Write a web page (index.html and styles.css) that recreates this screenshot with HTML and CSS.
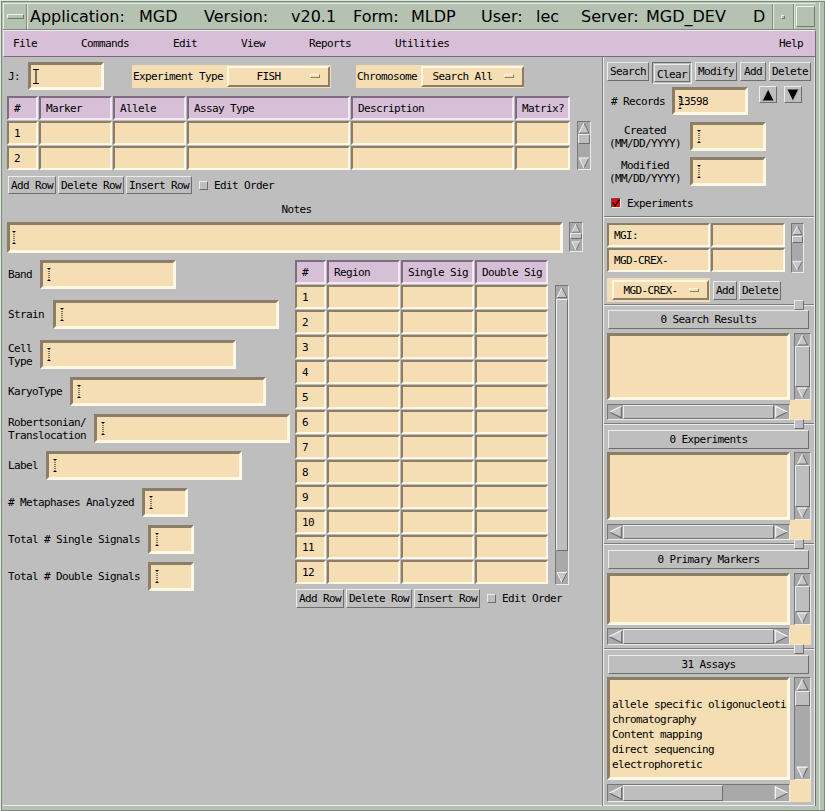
FILE: index.html
```html
<!DOCTYPE html>
<html lang="en">
<head>
<meta charset="utf-8">
<title>MGD - MLDP</title>
<link rel="stylesheet" href="styles.css">
</head>
<body>
<svg class="defs" width="0" height="0" aria-hidden="true">
  <symbol id="a-up" viewBox="0 0 12 12">
    <polygon points="6,1 11,11 1,11" fill="#c6c6c6"/>
    <polyline points="6,1 11,11 1,11" fill="none" stroke="#6c6c6c"/>
    <polyline points="1,11 6,1" fill="none" stroke="#f4f4f4"/>
  </symbol>
  <symbol id="a-down" viewBox="0 0 12 12">
    <polygon points="1,1 11,1 6,11" fill="#c6c6c6"/>
    <polyline points="11,1 6,11" fill="none" stroke="#6c6c6c"/>
    <polyline points="6,11 1,1 11,1" fill="none" stroke="#f4f4f4"/>
  </symbol>
  <symbol id="a-left" viewBox="0 0 12 12">
    <polygon points="1,6 11,1 11,11" fill="#c6c6c6"/>
    <polyline points="11,1 11,11 1,6" fill="none" stroke="#6c6c6c"/>
    <polyline points="1,6 11,1" fill="none" stroke="#f4f4f4"/>
  </symbol>
  <symbol id="a-right" viewBox="0 0 12 12">
    <polygon points="11,6 1,1 1,11" fill="#c6c6c6"/>
    <polyline points="11,6 1,11" fill="none" stroke="#6c6c6c"/>
    <polyline points="1,11 1,1 11,6" fill="none" stroke="#f4f4f4"/>
  </symbol>
  <symbol id="cur-solid" viewBox="0 0 6 15">
    <path d="M0 0.5H6M3 0.5V14.5M0 14.5H6" stroke="#000" fill="none"/>
  </symbol>
  <symbol id="cur-dot" viewBox="0 0 4 13">
    <path d="M0.5 0.5H3.5M0.5 12.5H3.5" stroke="#000" fill="none"/>
    <path d="M2 1V12" stroke="#000" stroke-dasharray="1 1" fill="none"/>
  </symbol>
  <symbol id="tri-up" viewBox="0 0 12 12">
    <polygon points="6,0.5 11.5,11.5 0.5,11.5" fill="#000"/>
    <polyline points="0.5,11.5 6,0.5" fill="none" stroke="#9a9a9a"/>
  </symbol>
  <symbol id="tri-down" viewBox="0 0 12 12">
    <polygon points="0.5,0.5 11.5,0.5 6,11.5" fill="#000"/>
    <polyline points="11.5,0.5 6,11.5" fill="none" stroke="#9a9a9a"/>
  </symbol>
</svg>

<div class="window">
  <div class="titlebar">
    <div class="tb-menu"><span class="tb-bar"></span></div>
    <div class="tb-title">
      <span>Application:</span><span>MGD</span><span>Version:</span><span>v20.1</span><span>Form:</span><span>MLDP</span><span>User:</span><span>lec</span><span>Server:</span><span>MGD_DEV</span><span>D</span>
    </div>
    <div class="tb-gap"></div>
    <div class="tb-min"><span class="tb-dot"></span></div>
    <div class="tb-max"><span class="tb-sq"></span></div>
  </div>

  <div class="menubar">
    <span>File</span><span>Commands</span><span>Edit</span><span>View</span><span>Reports</span><span>Utilities</span><span class="help">Help</span>
  </div>

  <div class="main">
    <!-- LEFT -->
    <div class="left">
      <div class="row1">
        <span class="lbl">J:</span>
        <div class="tf tf-j"><svg class="cur-s"><use href="#cur-solid"/></svg></div>
        <div class="opt opt-exp">
          <span class="opt-lbl">Experiment Type</span>
          <div class="optbtn"><span class="opt-val">FISH</span><span class="ind"></span></div>
        </div>
        <div class="opt opt-chr">
          <span class="opt-lbl">Chromosome</span>
          <div class="optbtn"><span class="opt-val">Search All</span><span class="ind"></span></div>
        </div>
      </div>

      <div class="t1wrap">
        <div class="grid grid1">
          <div class="hc">#</div><div class="hc">Marker</div><div class="hc">Allele</div><div class="hc">Assay Type</div><div class="hc">Description</div><div class="hc">Matrix?</div>
          <div class="c">1</div><div class="c"></div><div class="c"></div><div class="c"></div><div class="c"></div><div class="c"></div>
          <div class="c">2</div><div class="c"></div><div class="c"></div><div class="c"></div><div class="c"></div><div class="c"></div>
        </div>
        <div class="vs vs-t1">
          <svg class="arrv"><use href="#a-up"/></svg>
          <div class="thumb"></div>
          <div class="fill"></div>
          <svg class="arrv"><use href="#a-down"/></svg>
        </div>
      </div>

      <div class="btnrow btnrow1">
        <span class="btn">Add Row</span><span class="btn">Delete Row</span><span class="btn">Insert Row</span>
        <span class="cb"></span><span class="cb-lbl">Edit Order</span>
      </div>

      <div class="notes-lbl">Notes</div>
      <div class="notes-row">
        <div class="tf tf-notes"><svg class="cur-d"><use href="#cur-dot"/></svg></div>
        <div class="vs vs-notes">
          <svg class="arrv"><use href="#a-up"/></svg>
          <div class="thumb"></div>
          <div class="fill"></div>
          <svg class="arrv"><use href="#a-down"/></svg>
        </div>
      </div>

      <div class="lower">
        <div class="fields">
          <div class="frow loose"><span class="lbl">Band</span><div class="tf w136"><svg class="cur-d"><use href="#cur-dot"/></svg></div></div>
          <div class="frow loose wide"><span class="lbl">Strain</span><div class="tf w226"><svg class="cur-d"><use href="#cur-dot"/></svg></div></div>
          <div class="frow"><span class="lbl">Cell<br>Type</span><div class="tf w196"><svg class="cur-d"><use href="#cur-dot"/></svg></div></div>
          <div class="frow"><span class="lbl">KaryoType</span><div class="tf w196"><svg class="cur-d"><use href="#cur-dot"/></svg></div></div>
          <div class="frow"><span class="lbl">Robertsonian/<br>Translocation</span><div class="tf w196"><svg class="cur-d"><use href="#cur-dot"/></svg></div></div>
          <div class="frow"><span class="lbl">Label</span><div class="tf w196"><svg class="cur-d"><use href="#cur-dot"/></svg></div></div>
          <div class="frow"><span class="lbl"># Metaphases Analyzed</span><div class="tf w46"><svg class="cur-d"><use href="#cur-dot"/></svg></div></div>
          <div class="frow"><span class="lbl">Total # Single Signals</span><div class="tf w46"><svg class="cur-d"><use href="#cur-dot"/></svg></div></div>
          <div class="frow"><span class="lbl">Total # Double Signals</span><div class="tf w46"><svg class="cur-d"><use href="#cur-dot"/></svg></div></div>
        </div>

        <div class="t2col">
          <div class="t2top">
            <div class="grid grid2">
              <div class="hc">#</div><div class="hc">Region</div><div class="hc">Single Sig</div><div class="hc">Double Sig</div>
              <div class="c">1</div><div class="c"></div><div class="c"></div><div class="c"></div>
              <div class="c">2</div><div class="c"></div><div class="c"></div><div class="c"></div>
              <div class="c">3</div><div class="c"></div><div class="c"></div><div class="c"></div>
              <div class="c">4</div><div class="c"></div><div class="c"></div><div class="c"></div>
              <div class="c">5</div><div class="c"></div><div class="c"></div><div class="c"></div>
              <div class="c">6</div><div class="c"></div><div class="c"></div><div class="c"></div>
              <div class="c">7</div><div class="c"></div><div class="c"></div><div class="c"></div>
              <div class="c">8</div><div class="c"></div><div class="c"></div><div class="c"></div>
              <div class="c">9</div><div class="c"></div><div class="c"></div><div class="c"></div>
              <div class="c">10</div><div class="c"></div><div class="c"></div><div class="c"></div>
              <div class="c">11</div><div class="c"></div><div class="c"></div><div class="c"></div>
              <div class="c">12</div><div class="c"></div><div class="c"></div><div class="c"></div>
            </div>
            <div class="vs vs-t2">
              <svg class="arrv"><use href="#a-up"/></svg>
              <div class="thumb"></div>
              <div class="fill"></div>
              <svg class="arrv"><use href="#a-down"/></svg>
            </div>
          </div>
          <div class="btnrow btnrow2">
            <span class="btn">Add Row</span><span class="btn">Delete Row</span><span class="btn">Insert Row</span>
            <span class="cb"></span><span class="cb-lbl">Edit Order</span>
          </div>
        </div>
      </div>
    </div>

    <!-- RIGHT -->
    <div class="right">
      <div class="rtop">
        <div class="cmdrow">
          <span class="btn">Search</span>
          <span class="defbtn"><span class="btn">Clear</span></span>
          <span class="btn">Modify</span>
          <span class="btn btn-add">Add</span>
          <span class="btn">Delete</span>
        </div>
        <div class="recrow">
          <span class="lbl">#&nbsp;Records</span>
          <div class="tf tf-rec"><svg class="cur-d cur-over"><use href="#cur-dot"/></svg>13598</div>
          <span class="arrbtn arr-up"><svg class="tri"><use href="#tri-up"/></svg></span>
          <span class="arrbtn arr-down"><svg class="tri"><use href="#tri-down"/></svg></span>
        </div>
        <div class="daterow">
          <span class="dlbl">Created<br>(MM/DD/YYYY)</span>
          <div class="tf tf-date"><svg class="cur-d"><use href="#cur-dot"/></svg></div>
        </div>
        <div class="daterow daterow2">
          <span class="dlbl">Modified<br>(MM/DD/YYYY)</span>
          <div class="tf tf-date"><svg class="cur-d"><use href="#cur-dot"/></svg></div>
        </div>
        <div class="exprow">
          <span class="cb-on"><svg class="chk" viewBox="0 0 8 8"><path d="M0.8 3.6 L3.2 6.8 L7.4 0.8" stroke="#000" stroke-width="1.6" fill="none"/></svg></span>
          <span class="cb-lbl">Experiments</span>
        </div>
      </div>
      <div class="sep"></div>

      <div class="mgipane">
        <div class="mgitop">
          <div class="grid grid3">
            <div class="c">MGI:</div><div class="c"></div>
            <div class="c">MGD-CREX-</div><div class="c"></div>
          </div>
          <div class="vs vs-mgi">
            <svg class="arrv"><use href="#a-up"/></svg>
            <div class="thumb"></div>
            <div class="fill"></div>
            <svg class="arrv"><use href="#a-down"/></svg>
          </div>
        </div>
        <div class="mgirow">
          <div class="opt opt-mgi">
            <div class="optbtn"><span class="opt-val">MGD-CREX-</span><span class="ind"></span></div>
          </div>
          <span class="btn btn-sm">Add</span>
          <span class="btn btn-sm">Delete</span>
        </div>
      </div>
      <div class="sep"><span class="sash"></span></div>

      <div class="sect s1">
        <div class="bar">0 Search Results</div>
        <div class="sw sw1">
          <div class="list"></div>
          <div class="vs vs-full"><svg class="arrv"><use href="#a-up"/></svg><div class="thumb"></div><svg class="arrv"><use href="#a-down"/></svg></div>
          <div class="corner"></div>
          <div class="hs"><svg class="arrh"><use href="#a-left"/></svg><div class="thumb"></div><svg class="arrh"><use href="#a-right"/></svg></div>
        </div>
      </div>
      <div class="sep"><span class="sash"></span></div>

      <div class="sect s2">
        <div class="bar">0 Experiments</div>
        <div class="sw sw2">
          <div class="list"></div>
          <div class="vs vs-full"><svg class="arrv"><use href="#a-up"/></svg><div class="thumb"></div><svg class="arrv"><use href="#a-down"/></svg></div>
          <div class="corner"></div>
          <div class="hs"><svg class="arrh"><use href="#a-left"/></svg><div class="thumb"></div><svg class="arrh"><use href="#a-right"/></svg></div>
        </div>
      </div>
      <div class="sep"><span class="sash"></span></div>

      <div class="sect s3">
        <div class="bar">0 Primary Markers</div>
        <div class="sw sw3">
          <div class="list"></div>
          <div class="vs vs-full"><svg class="arrv"><use href="#a-up"/></svg><div class="thumb"></div><svg class="arrv"><use href="#a-down"/></svg></div>
          <div class="corner"></div>
          <div class="hs"><svg class="arrh"><use href="#a-left"/></svg><div class="thumb"></div><svg class="arrh"><use href="#a-right"/></svg></div>
        </div>
      </div>
      <div class="sep"><span class="sash"></span></div>

      <div class="sect s4">
        <div class="bar">31 Assays</div>
        <div class="sw sw4">
          <div class="list list-asy">
            <div>allele specific oligonucleoti</div>
            <div>chromatography</div>
            <div>Content mapping</div>
            <div>direct sequencing</div>
            <div>electrophoretic</div>
          </div>
          <div class="vs vs-asy"><svg class="arrv"><use href="#a-up"/></svg><div class="thumb"></div><div class="fill"></div><svg class="arrv"><use href="#a-down"/></svg></div>
          <div class="corner"></div>
          <div class="hs hs-asy"><svg class="arrh"><use href="#a-left"/></svg><div class="thumb"></div><div class="fill"></div><svg class="arrh"><use href="#a-right"/></svg></div>
        </div>
      </div>
    </div>
  </div>
</div>
</body>
</html>
```

FILE: styles.css
```css
* { box-sizing: border-box; margin: 0; padding: 0; }
html, body { width: 825px; height: 811px; overflow: hidden; }
body {
  background: #b5c2b1;
  font-family: "DejaVu Sans Mono", "Liberation Mono", monospace;
  font-size: 11px;
  letter-spacing: -0.62px;
  line-height: 13px;
  color: #000;
}
.defs { position: absolute; width: 0; height: 0; overflow: hidden; }

.window {
  width: 825px;
  height: 811px;
  padding: 3px 9px 5px 3px;
  box-shadow: inset 1px 1px 0 #dfe7dd, inset 2px 2px 0 #7e8b7c, inset -1px -1px 0 #7e8b7c, inset -5px 0 0 #b5c2b1, inset -6px 0 0 #e1e8df;
}

/* ---------- title bar ---------- */
.titlebar {
  display: flex;
  height: 27px;
  border-top: 1px solid #e3eae1;
  border-bottom: 1px solid #7e8b7c;
}
.tb-menu {
  width: 24px;
  display: flex;
  align-items: center;
  justify-content: center;
  border-right: 1px solid #7e8b7c;
  border-left: 1px solid #e3eae1;
}
.tb-bar {
  width: 17px;
  height: 5px;
  border: 1px solid;
  border-color: #eef3ec #6f7c6d #6f7c6d #eef3ec;
}
.tb-title {
  width: 740px;
  overflow: hidden;
  display: grid;
  grid-template-columns: 109px 65px 87px 62px 58px 70px 55px 45px 65px 107px 14px;
  align-items: center;
  padding-left: 2px;
  font-family: "DejaVu Sans", "Liberation Sans", sans-serif;
  font-size: 16px;
  letter-spacing: 0;
  line-height: 20px;
  white-space: nowrap;
  border-left: 1px solid #e3eae1;
}
.tb-gap { width: 5px; }
.tb-min, .tb-max {
  display: flex;
  align-items: center;
  justify-content: center;
  border-left: 1px solid #7e8b7c;
  box-shadow: inset 1px 0 0 #e3eae1;
}
.tb-min { width: 21px; }
.tb-max { width: 23px; }
.tb-dot {
  width: 4px;
  height: 4px;
  border: 1px solid;
  border-color: #eef3ec #6f7c6d #6f7c6d #eef3ec;
}
.tb-sq {
  width: 19px;
  height: 21px;
  border: 1px solid;
  border-color: #eef3ec #6f7c6d #6f7c6d #eef3ec;
}

/* ---------- menu bar ---------- */
.menubar {
  display: flex;
  align-items: center;
  gap: 44px;
  height: 27px;
  padding: 0 12px 0 9px;
  background: #d8bfd8;
  border: 1px solid;
  border-color: #f3e8f3 #7b6a7b #7b6a7b #f3e8f3;
}
.menubar .help { margin-left: auto; }

/* ---------- main ---------- */
.main {
  display: flex;
  height: 749px;
  background: #bebebe;
  box-shadow: inset 0 -1px 0 #ececec;
}
.left { width: 599px; display: flow-root; }
.right {
  width: 214px;
  border-left: 1px solid #7c7c7c;
  border-right: 1px solid #6e6e6e;
  box-shadow: inset 1px 0 0 #ececec, inset -1px 0 0 #e6e6e6;
  padding: 0 1px;
}

/* generic widgets */
.lbl { white-space: nowrap; }
.tf {
  display: flex;
  align-items: center;
  height: 29px;
  padding-left: 4px;
  background: #f5deb3;
  border: 3px solid;
  border-color: #8c7e66 #fff8e4 #fff8e4 #8c7e66;
  position: relative;
}
.cur-s { width: 6px; height: 15px; display: block; }
.cur-d { width: 4px; height: 13px; display: block; }
.w136 { width: 136px; }
.w226 { width: 226px; }
.w196 { width: 196px; }
.w46 { width: 46px; }

.btn {
  display: inline-flex;
  align-items: center;
  justify-content: center;
  height: 18px;
  padding: 0 2px;
  background: #bebebe;
  border: 1px solid;
  border-color: #ececec #6e6e6e #6e6e6e #ececec;
  white-space: nowrap;
}
.cb {
  width: 9px;
  height: 9px;
  background: #bebebe;
  border: 1px solid;
  border-color: #ececec #6e6e6e #6e6e6e #ececec;
}
.cb-lbl { white-space: nowrap; }

.opt {
  display: flex;
  align-items: center;
  background: #f5deb3;
  height: 23px;
  padding-left: 1px;
}
.opt-lbl { white-space: nowrap; }
.optbtn {
  display: flex;
  align-items: center;
  width: 103px;
  height: 21px;
  margin-left: 4px;
  background: #f5deb3;
  border: 2px solid;
  border-color: #fff8e4 #8c7e66 #8c7e66 #fff8e4;
}
.opt-val { flex: 1; text-align: center; white-space: nowrap; }
.ind {
  width: 10px;
  height: 4px;
  margin: 0 8px 0 2px;
  border: 1px solid;
  border-color: #fff8e4 #8c7e66 #8c7e66 #fff8e4;
}

.grid { display: grid; gap: 1px; }
.hc, .c {
  display: flex;
  align-items: center;
  padding-left: 5px;
  border: 2px solid;
  white-space: nowrap;
}
.hc {
  background: #d8bfd8;
  border-color: #7f6d7f #f3e8f3 #f3e8f3 #7f6d7f;
}
.c {
  background: #f5deb3;
  border-color: #8c7e66 #fff8e4 #fff8e4 #8c7e66;
}

/* scrollbars */
.vs {
  display: flex;
  flex-direction: column;
  background: #a9a9a9;
  border: 1px solid;
  border-color: #777 #ececec #ececec #777;
}
.arrv { display: block; width: 100%; height: 12px; flex: none; }
.vs .thumb, .hs .thumb {
  background: #bebebe;
  border: 1px solid;
  border-color: #ececec #6e6e6e #6e6e6e #ececec;
  flex: none;
}
.fill { flex: 1; }
.vs-full .thumb { flex: 1; }
.hs {
  display: flex;
  background: #a9a9a9;
  border: 1px solid;
  border-color: #777 #ececec #ececec #777;
}
.arrh { display: block; width: 15px; height: 100%; flex: none; }
.hs .thumb { flex: 1; }
.hs-asy .thumb { flex: none; width: 100px; }

/* ---------- left column ---------- */
.row1 {
  display: flex;
  align-items: center;
  height: 28px;
  margin-top: 5px;
  padding-left: 5px;
}
.row1 .lbl { width: 12px; }
.tf-j { width: 76px; height: 28px; margin-left: 8px; padding-left: 2px; }
.opt-exp { width: 199px; margin-left: 28px; }
.opt-chr { width: 168px; margin-left: 25px; }

.t1wrap { display: flex; margin: 6px 0 0 4px; }
.grid1 {
  grid-template-columns: 31px 73px 73px 163px 163px 55px;
  grid-template-rows: 24px 24px 24px;
}
.vs-t1 { width: 14px; height: 49px; margin: 25px 0 0 7px; }
.vs-t1 .thumb { height: 10px; }

.btnrow { display: flex; align-items: center; gap: 2px; }
.btnrow1 { margin: 6px 0 0 5px; height: 18px; }
.btnrow2 { margin: 4px 0 0 1px; height: 19px; }
.btnrow2 .btn { height: 19px; }
.btnrow .cb { margin-left: 5px; }
.btnrow .cb-lbl { margin-left: 4px; }

.notes-lbl { margin: 9px 0 0 4px; width: 579px; text-align: center; height: 13px; }
.notes-row { display: flex; margin: 6px 0 0 4px; }
.tf-notes { width: 556px; height: 31px; padding-left: 2px; }
.vs-notes { width: 14px; height: 30px; margin-left: 6px; }
.vs-notes .arrv { height: 10px; }
.vs-notes .thumb { height: 6px; }

.lower { display: flex; margin-top: 7px; }
.fields { width: 287px; margin-left: 5px; display: flex; flex-direction: column; }
.frow { display: flex; align-items: center; gap: 8px; height: 29px; margin-bottom: 8px; }
.frow.loose { margin-bottom: 11px; }
.frow.wide { gap: 9px; }

.t2col { display: flex; flex-direction: column; }
.t2top { display: flex; }
.grid2 {
  grid-template-columns: 31px 73px 73px 73px;
  grid-template-rows: repeat(13, 24px);
}
.vs-t2 { width: 14px; height: 300px; margin: 25px 0 0 7px; }
.vs-t2 .arrv { height: 13px; }
.vs-t2 .thumb { height: 252px; }

/* ---------- right column ---------- */
.rtop { height: 159px; display: flow-root; }
.cmdrow { display: flex; align-items: flex-start; gap: 3px; margin: 5px 0 0 3px; height: 22px; }
.cmdrow > .btn { height: 19px; }
.btn-add { padding: 0 3px; }
.defbtn {
  display: inline-flex;
  padding: 1px;
  border: 1px solid;
  border-color: #6e6e6e #ececec #ececec #6e6e6e;
}
.defbtn .btn { height: 18px; padding-top: 2px; }

.recrow { display: flex; align-items: flex-start; height: 29px; margin: 2px 0 0 7px; }
.recrow .lbl { align-self: center; margin-top: 2px; }
.tf-rec { width: 76px; height: 28px; margin: 1px 0 0 7px; padding-left: 3px; }
.cur-over { position: absolute; left: 3px; top: 6px; }
.arrbtn {
  display: flex;
  align-items: center;
  justify-content: center;
  width: 18px;
  height: 17px;
  background: #bebebe;
  border: 1px solid;
  border-color: #ececec #6e6e6e #6e6e6e #ececec;
}
.arr-up { margin-left: 11px; }
.arr-down { margin-left: 7px; }
.tri { width: 12px; height: 12px; display: block; }

.daterow { display: flex; align-items: center; margin: 7px 0 0 5px; height: 29px; }
.daterow2 { margin-top: 6px; }
.dlbl { width: 72px; text-align: center; white-space: nowrap; }
.tf-date { width: 76px; margin-left: 9px; }

.exprow { display: flex; align-items: center; margin: 12px 0 0 7px; height: 10px; }
.cb-on {
  display: flex;
  align-items: center;
  justify-content: center;
  width: 10px;
  height: 10px;
  background: #ff0000;
  border: 1px solid;
  border-color: #555 #ececec #ececec #555;
}
.chk { width: 8px; height: 8px; display: block; }
.exprow .cb-lbl { margin-left: 6px; }

.sep {
  position: relative;
  height: 2px;
  border-top: 1px solid #7c7c7c;
  border-bottom: 1px solid #ececec;
}
.sash {
  position: absolute;
  left: 190px;
  top: -5px;
  width: 10px;
  height: 10px;
  background: #bebebe;
  border: 1px solid;
  border-color: #ececec #6e6e6e #6e6e6e #ececec;
}

.mgipane { height: 86px; display: flow-root; }
.mgitop { display: flex; margin: 5px 0 0 3px; }
.grid3 {
  grid-template-columns: 103px 74px;
  grid-template-rows: 24px 24px;
}
.vs-mgi { width: 13px; height: 50px; margin-left: 6px; }
.vs-mgi .thumb { height: 7px; }
.mgirow { display: flex; align-items: center; margin: 5px 0 0 3px; height: 24px; }
.opt-mgi { width: 103px; height: 24px; padding-left: 5px; }
.opt-mgi .optbtn { width: 97px; height: 20px; margin-left: 0; }
.mgirow .btn { height: 19px; }
.mgirow .btn:first-of-type { margin-left: 3px; }
.mgirow .btn + .btn { margin-left: 2px; }

.sect { display: flex; flex-direction: column; }
.s1 { padding-top: 4px; height: 117px; }
.s2 { padding-top: 5px; height: 118px; }
.s3 { padding-top: 5px; height: 103px; }
.s4 { padding-top: 5px; }
.bar {
  width: 201px;
  height: 19px;
  margin-left: 4px;
  display: flex;
  align-items: center;
  justify-content: center;
  background: #bebebe;
  border: 1px solid;
  border-color: #ececec #6e6e6e #6e6e6e #ececec;
  white-space: nowrap;
  flex: none;
}
.sw {
  display: grid;
  grid-template-columns: 183px 4px 17px;
  margin: 4px 0 0 3px;
}
.sw1 { grid-template-rows: 67px 4px 16px; }
.sw2 { grid-template-rows: 68px 4px 16px; margin-top: 3px; }
.sw3 { grid-template-rows: 52px 3px 17px; }
.sw4 { grid-template-rows: 103px 4px 18px; margin-top: 3px; }
.sw .list { grid-column: 1; grid-row: 1; }
.sw .vs { grid-column: 3; grid-row: 1; }
.sw .corner { grid-column: 2 / 4; grid-row: 2 / 4; background: #f5deb3; }
.sw .hs { grid-column: 1; grid-row: 3; }
.list {
  background: #f5deb3;
  border: 3px solid;
  border-color: #8c7e66 #fff8e4 #fff8e4 #8c7e66;
  overflow: hidden;
}
.list-asy { padding: 17px 0 0 2px; line-height: 15px; white-space: nowrap; }
.vs-asy .arrv { height: 13px; }
.vs-asy .thumb { height: 15px; }
```
